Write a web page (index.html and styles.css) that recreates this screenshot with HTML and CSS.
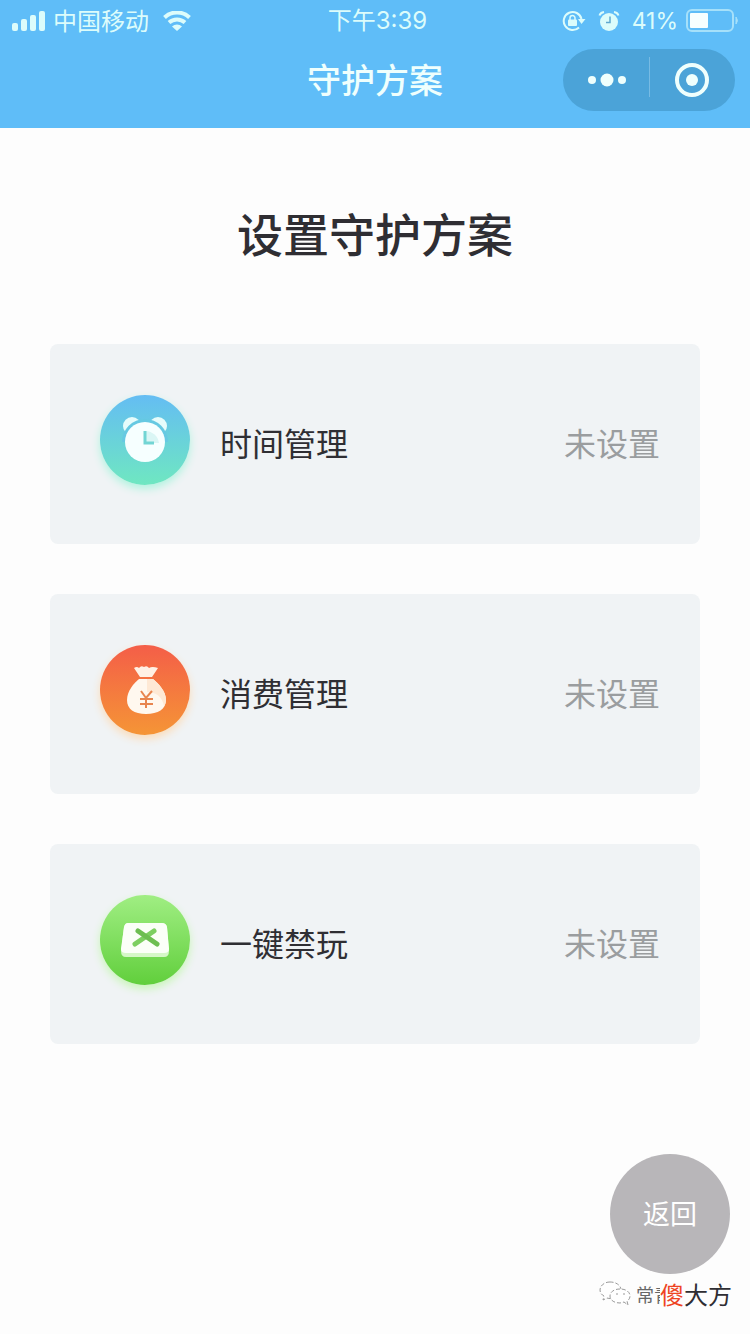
FILE: index.html
```html
<!DOCTYPE html>
<html lang="zh-CN">
  <head>
    <meta charset="UTF-8" />
    <meta name="viewport" content="width=device-width, initial-scale=1.0" />
    <title>守护方案</title>
    <link rel="stylesheet" href="styles.css" />
  </head>
  <body>
    <header class="header">
      <div class="status-bar">
        <div class="status-left">
          <svg class="signal" width="34" height="20" viewBox="0 0 34 20" fill="currentColor">
            <rect x="0" y="12" width="6" height="8" rx="2" />
            <rect x="9" y="8" width="6" height="12" rx="2" />
            <rect x="18" y="4" width="6" height="16" rx="2" />
            <rect x="27" y="0" width="6" height="20" rx="2" />
          </svg>
          <span class="carrier">中国移动</span>
          <svg width="28" height="20" viewBox="0 0 28 20">
            <path d="M1.500 6.500a18 18 0 0 1 25 0M6 11.500a12 12 0 0 1 16 0" fill="none" stroke="currentColor" stroke-width="4" />
            <path d="M9 15.500a7.500 7.500 0 0 1 10 0L14 20z" fill="currentColor" />
          </svg>
        </div>
        <time class="status-time">下午3:39</time>
        <div class="status-right">
          <svg width="24" height="22" viewBox="0 0 24 22">
            <path d="M17 17.500a9 9 0 1 1 2.500-8.500" fill="none" stroke="currentColor" stroke-width="2" />
            <path d="M16 9h7.500l-4 5z" fill="currentColor" />
            <rect x="6" y="9.500" width="9" height="6.500" rx="1" fill="currentColor" />
            <path d="M8 10V8a2.500 2.500 0 0 1 5 0v2" fill="none" stroke="currentColor" stroke-width="1.500" />
          </svg>
          <svg class="alarm" width="22" height="22" viewBox="0 0 22 22">
            <circle cx="11" cy="12" r="9" fill="currentColor" />
            <path d="M1.500 5.500Q2.500 2.500 6 2M20.500 5.500Q19.500 2.500 16 2" fill="none" stroke="currentColor" stroke-width="2" />
            <path d="M12 6.500v6H8" fill="none" stroke="#5fa9d0" stroke-width="1.500" />
          </svg>
          <span>41%</span>
          <svg width="53" height="24" viewBox="0 0 53 24">
            <rect x="1" y="1" width="46" height="21" rx="5" fill="none" stroke="#a5e0fa" stroke-width="2" />
            <rect x="4" y="4" width="18" height="15" rx="1" fill="#f8ffff" />
            <path d="M50 8q3 3.500 0 7z" fill="#a5e0fa" stroke="#a5e0fa" />
          </svg>
        </div>
      </div>
      <div class="nav-bar">
        <h1 class="nav-title">守护方案</h1>
        <div class="capsule">
          <button class="capsule-btn" type="button" aria-label="更多">
            <svg width="40" height="16" viewBox="0 0 40 16" fill="currentColor">
              <circle cx="6" cy="8" r="4" />
              <circle cx="21" cy="8" r="6.500" />
              <circle cx="36" cy="8" r="4" />
            </svg>
          </button>
          <button class="capsule-btn" type="button" aria-label="关闭">
            <svg width="36" height="36" viewBox="0 0 36 36">
              <circle cx="18" cy="18" r="15" fill="none" stroke="currentColor" stroke-width="4" />
              <circle cx="18" cy="18" r="6" fill="currentColor" />
            </svg>
          </button>
        </div>
      </div>
    </header>

    <main class="main">
      <h2 class="page-title">设置守护方案</h2>
      <div class="plan-list">
        <button class="plan" type="button">
          <span class="plan-icon icon-time">
            <svg width="90" height="90" viewBox="0 0 90 90">
              <g fill="#e6fcfb">
                <circle cx="32" cy="31" r="9" />
                <circle cx="58" cy="31" r="9" />
              </g>
              <path d="M22 47a23 23 0 0 1 46 0z" fill="#66c9e2" />
              <circle cx="45" cy="47" r="20" fill="#f6ffff" />
              <path d="M45 36v12h14a14 14 0 0 0-14-12z" fill="#daf6f5" />
              <path d="M45 36v12h9" fill="none" stroke="#72d5d4" stroke-width="3" />
            </svg>
          </span>
          <span class="plan-name">时间管理</span>
          <span class="plan-state">未设置</span>
        </button>
        <button class="plan" type="button">
          <span class="plan-icon icon-money">
            <svg width="90" height="90" viewBox="0 0 90 90">
              <path d="M34 23q3-2 5 0 2-3 5-1 3-2 5 1 3-2 9 0l-6 9H40z" fill="#fff1e4" />
              <path d="M39 34h14c5 4 13 12 13 21 0 9-8 14-20 14S27 64 27 55c0-9 7-17 12-21z" fill="#fff8ef" />
              <path d="M47 34h6c5 4 13 12 13 21q0 3-2 6-3-14-17-14z" fill="#fee9d5" />
              <path d="M41 46l5 7 6-7M46 53v10M40 54h13M40 59h13" fill="none" stroke="#e8854f" stroke-width="2" />
            </svg>
          </span>
          <span class="plan-name">消费管理</span>
          <span class="plan-state">未设置</span>
        </button>
        <button class="plan" type="button">
          <span class="plan-icon icon-ban">
            <svg width="90" height="90" viewBox="0 0 90 90">
              <path d="M28 28h34q4 0 5 4l2 24q0 6-5 6H26q-5 0-5-6l3-24q1-4 4-4z" fill="#d5f7c7" />
              <path d="M28 28h34q4 0 5 4l2 22q0 4-5 4H26q-5 0-5-4l3-22q1-4 4-4z" fill="#fbfff8" />
              <path d="M54 36L35 49" stroke="#7dcf61" stroke-width="5" stroke-linecap="round" />
              <path d="M38 36l19 13" stroke="#6dbe51" stroke-width="5" stroke-linecap="round" />
            </svg>
          </span>
          <span class="plan-name">一键禁玩</span>
          <span class="plan-state">未设置</span>
        </button>
      </div>
    </main>

    <footer class="footer">
      <button class="back-btn" type="button">返回</button>
      <div class="credit">
        <svg width="32" height="26" viewBox="0 0 32 26" fill="#fff" stroke="#999" stroke-dasharray="4 2">
          <path d="M11 1C5 1 1 5 1 9c0 3 2 5 4 6l-1 4 4-2q3 1 6 0c5-1 8-4 8-8s-4-8-11-8z" />
          <path d="M21 8c-6 0-10 3-10 7s4 7 10 7l4-1 4 3-1-4c2-1 3-3 3-5 0-4-4-7-10-7z" />
          <path d="M17 13h2M24 13h2" />
        </svg>
        <span class="credit-name">常青</span>
        <span class="credit-mark"><em>傻</em>大方</span>
      </div>
    </footer>
  </body>
</html>
```
FILE: styles.css
```css
body {
  margin: 0;
  min-height: 100vh;
  display: flex;
  flex-direction: column;
  background-color: #fdfdfd;
  color: #2f2e33;
  font-family: "Noto Sans CJK SC", sans-serif;
}
button {
  margin: 0;
  padding: 0;
  border: none;
  background: none;
  color: inherit;
  font-family: inherit;
  cursor: pointer;
}
svg {
  display: block;
  flex-shrink: 0;
}
.header {
  background-color: #5fbdf8;
  color: #effffd;
}
.status-bar {
  display: grid;
  grid-template-columns: 1fr auto 1fr;
  align-items: center;
  height: 40px;
  padding: 0 11px 0 12px;
  font-size: 24px;
  line-height: 40px;
  color: #dcfcfb;
}
.status-left,
.status-right {
  display: flex;
  align-items: center;
}
.carrier {
  margin: 0 14px 2px 7px;
}
.status-time,
.status-right {
  font-family: Inter, "Noto Sans CJK SC", sans-serif;
}
.status-time {
  padding-left: 4px;
}
.status-right {
  justify-content: flex-end;
  gap: 8px;
  font-size: 23px;
}
.alarm {
  margin: 0 4px;
}
.nav-bar {
  display: grid;
  grid-template-columns: 1fr auto 1fr;
  align-items: center;
  height: 80px;
  padding: 0 15px 8px;
}
.nav-title {
  grid-column: 2;
  margin: 0;
  padding-bottom: 2px;
  font-size: 34px;
  font-weight: 500;
  line-height: 48px;
}
.capsule {
  justify-self: end;
  display: flex;
  width: 172px;
  height: 62px;
  border-radius: 31px;
  background-color: #4ba3d8;
}
.capsule-btn {
  flex: 1;
  display: flex;
  align-items: center;
  justify-content: center;
}
.capsule-btn + .capsule-btn {
  position: relative;
}
.capsule-btn + .capsule-btn::before {
  content: "";
  position: absolute;
  left: 0;
  top: 8px;
  bottom: 14px;
  width: 1px;
  background-color: #77bbe4;
}
.main {
  padding: 68px 50px 0;
}
.page-title {
  margin: 0 0 76px;
  text-align: center;
  font-size: 46px;
  font-weight: 500;
  line-height: 72px;
}
.plan-list {
  display: flex;
  flex-direction: column;
  gap: 50px;
}
.plan {
  display: flex;
  align-items: center;
  height: 200px;
  padding: 0 40px 4px 50px;
  border-radius: 8px;
  background-color: #f0f3f5;
  font-size: 32px;
  line-height: 48px;
  text-align: left;
}
.plan-icon {
  width: 90px;
  height: 90px;
  margin: 0 30px 4px 0;
  border-radius: 50%;
}
.icon-time {
  background: linear-gradient(#64bdf3, #6fe7c1);
  box-shadow: 0 4px 8px #b0f3df;
}
.icon-money {
  background: linear-gradient(#f45e48, #f59536);
  box-shadow: 0 4px 8px #fbdcb9;
}
.icon-ban {
  background: linear-gradient(#a0ee83, #61cf3c);
  box-shadow: 0 4px 8px #c8f6b7;
}
.plan-state {
  margin-left: auto;
  color: #9a9d9f;
}
.footer {
  display: flex;
  flex-direction: column;
  align-items: flex-end;
  margin-top: auto;
  padding: 0 18px 20px;
}
.back-btn {
  width: 120px;
  height: 120px;
  margin-right: 2px;
  padding-bottom: 4px;
  border-radius: 50%;
  background-color: #b8b6b9;
  color: #fff;
  font-size: 27px;
}
.credit {
  display: flex;
  align-items: center;
  height: 40px;
  line-height: 40px;
}
/* the account name is cut off where the mark begins */
.credit-name {
  width: 24px;
  margin-left: 5px;
  overflow: hidden;
  white-space: nowrap;
  font-size: 18px;
  color: #666;
}
.credit-mark {
  font-size: 24px;
}
.credit-mark em {
  font-style: normal;
  color: #ee4423;
}
```
